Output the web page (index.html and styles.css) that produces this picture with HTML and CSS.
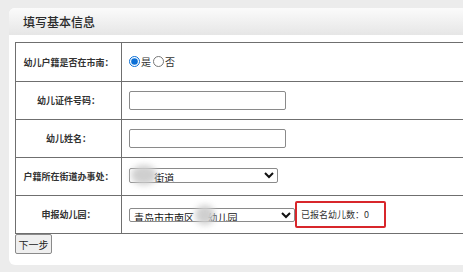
FILE: index.html
```html
<!DOCTYPE html>
<html lang="zh-CN">
<head>
  <meta charset="UTF-8"/>
  <title>填写基本信息</title>
  <link rel="stylesheet" href="styles.css">
</head>
<body>
  <div class="panel">
    <div class="panel-head">填写基本信息</div>
    <div class="panel-body">
      <table class="form-table">
        <tr>
          <th>幼儿户籍是否在市南：</th>
          <td>
            <label class="radio"><input type="radio" name="local" checked>是</label>
            <label class="radio"><input type="radio" name="local">否</label>
          </td>
        </tr>
        <tr>
          <th>幼儿证件号码：</th>
          <td><input type="text" class="text-input"></td>
        </tr>
        <tr>
          <th>幼儿姓名：</th>
          <td><input type="text" class="text-input"></td>
        </tr>
        <tr>
          <th>户籍所在街道办事处：</th>
          <td>
            <div class="select-wrap">
              <select class="sel sel-street">
                <option>&nbsp;&nbsp;&nbsp;&nbsp;&nbsp;&nbsp;&nbsp;&nbsp;&nbsp;街道</option>
              </select>
              <span class="blur blur-street"></span>
            </div>
          </td>
        </tr>
        <tr>
          <th>申报幼儿园：</th>
          <td>
            <div class="school-line">
              <div class="select-wrap">
                <select class="sel sel-school">
                  <option>青岛市市南区&nbsp;&nbsp;&nbsp;&nbsp;&nbsp;&nbsp;幼儿园</option>
                </select>
                <span class="blur blur-school"></span>
              </div>
              <span class="count-box">已报名幼儿数：0</span>
            </div>
          </td>
        </tr>
      </table>
      <button class="next-btn">下一步</button>
    </div>
  </div>
</body>
</html>
```

FILE: styles.css
```css
* {
  box-sizing: border-box;
}
html,
body {
  overflow: hidden;
}
body {
  margin: 0;
  padding: 8px 0 0 9px;
  background: #ececec;
  font-family: "Noto Sans CJK SC", "Liberation Sans", sans-serif;
  color: #333;
}
.panel {
  width: 454px;
  height: 257px;
  background: #fff;
  border-radius: 6px 0 0 6px;
}
.panel-head {
  height: 27px;
  line-height: 27px;
  padding-left: 14px;
  font-size: 12px;
  font-weight: 500;
  color: #2a2a2a;
  background: linear-gradient(#fbfbfb, #e6e6e6);
  border-radius: 6px 0 0 0;
}
.panel-body {
  padding: 7px 0 0 6px;
}
.form-table {
  border-collapse: collapse;
  width: 452px;
  border: 1px solid #6f6f6f;
  border-right: none;
}
.form-table tr {
  height: 38px;
}
.form-table tr:first-child {
  height: 39px;
}
.form-table th,
.form-table td {
  border: 1px solid #6f6f6f;
  padding: 0;
  font-size: 9px;
}
.form-table td {
  border-right: none;
  padding-left: 7px;
}
.form-table th {
  width: 106px;
  font-weight: bold;
  color: #333;
  text-align: center;
}
.radio {
  display: inline-flex;
  align-items: center;
  font-size: 10px;
  color: #333;
}
.radio input {
  width: 11px;
  height: 11px;
  margin: 0 1px 0 0;
  accent-color: #0b6fd6;
}
.text-input {
  width: 157px;
  height: 19px;
  border: 1px solid #8a8a8a;
  border-radius: 2px;
  display: block;
}
.select-wrap {
  position: relative;
  display: inline-block;
}
.sel {
  height: 15px;
  font-size: 10px;
  font-family: "Noto Sans CJK SC", "Liberation Sans", sans-serif;
  color: #111;
  border: 1px solid #8a8a8a;
  border-radius: 2px;
  padding: 0;
  background: #fff;
  display: block;
}
.sel-street {
  width: 149px;
}
.sel-school {
  width: 166px;
  height: 14px;
}
.blur {
  position: absolute;
  top: -3px;
  height: 20px;
  border-radius: 50%;
  background: #cfcfcf;
  filter: blur(3px);
}
.blur-street {
  left: 2px;
  width: 26px;
}
.blur-school {
  left: 66px;
  width: 20px;
}
.school-line {
  display: flex;
  align-items: center;
}
.count-box {
  margin-left: 0;
  width: 91px;
  height: 27px;
  line-height: 24px;
  border: 2px solid #d8262b;
  border-radius: 2px;
  padding-left: 4px;
  font-size: 9px;
  color: #333;
}
.next-btn {
  display: block;
  width: 37px;
  height: 20px;
  padding: 0;
  font-size: 10px;
  font-family: "Noto Sans CJK SC", "Liberation Sans", sans-serif;
  color: #222;
  background: #efefef;
  border: 1px solid #8a8a8a;
  border-radius: 2px;
}
```
